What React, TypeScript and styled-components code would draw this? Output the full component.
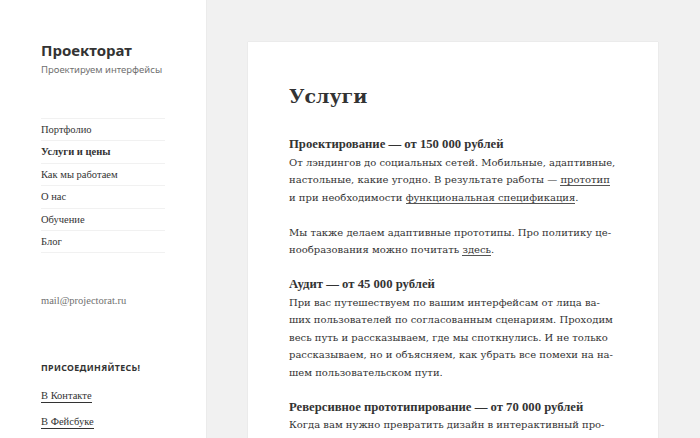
import React from "react";
import styled, { createGlobalStyle } from "styled-components";

const GlobalStyle = createGlobalStyle`
  html, body {
    margin: 0;
    padding: 0;
    background: #f1f1f1;
  }
  body {
    font-family: "DejaVu Serif", "Liberation Serif", serif;
    color: #333;
    overflow: hidden;
  }
`;

const menu = [
  { title: "Портфолио" },
  { title: "Услуги и цены", current: true },
  { title: "Как мы работаем" },
  { title: "О нас" },
  { title: "Обучение" },
  { title: "Блог" },
];

const App: React.FunctionComponent = () => {
  return (
    <Page>
      <GlobalStyle />
      <Sidebar>
        <SiteTitle>Проекторат</SiteTitle>
        <Tagline>Проектируем интерфейсы</Tagline>
        <Nav>
          {menu.map((item) => (
            <NavItem key={item.title} $current={item.current}>
              {item.title}
            </NavItem>
          ))}
        </Nav>
        <Email>mail@projectorat.ru</Email>
        <WidgetTitle>Присоединяйтесь!</WidgetTitle>
        <WidgetLink>В Контакте</WidgetLink>
        <WidgetLink>В Фейсбуке</WidgetLink>
      </Sidebar>
      <Content>
        <Card>
          <Title>Услуги</Title>
          <Para>
            <Lead>Проектирование — от 150 000 рублей</Lead>
            <br />
            От лэндингов до социальных сетей. Мобильные, адаптивные,
            <br />
            настольные, какие угодно. В результате работы — <Link>прототип</Link>
            <br />и при необходимости <Link>функциональная спецификация</Link>.
          </Para>
          <Para>
            Мы также делаем адаптивные прототипы. Про политику це-
            <br />
            нообразования можно почитать <Link>здесь</Link>.
          </Para>
          <Para>
            <Lead>Аудит — от 45 000 рублей</Lead>
            <br />
            При вас путешествуем по вашим интерфейсам от лица ва-
            <br />
            ших пользователей по согласованным сценариям. Проходим
            <br />
            весь путь и рассказываем, где мы споткнулись. И не только
            <br />
            рассказываем, но и объясняем, как убрать все помехи на на-
            <br />
            шем пользовательском пути.
          </Para>
          <Para>
            <Lead>Реверсивное прототипирование — от 70 000 рублей</Lead>
            <br />
            Когда вам нужно превратить дизайн в интерактивный про-
            <br />
            тотип, чтобы проверить его на пользователях до начала
          </Para>
        </Card>
      </Content>
    </Page>
  );
};

const Page = styled.div`
  display: flex;
  width: 700px;
  height: 438px;
  overflow: hidden;
`;

const Sidebar = styled.aside`
  width: 206px;
  flex-shrink: 0;
  background: #fff;
  box-shadow: 0 0 1px rgba(0, 0, 0, 0.15);
  padding: 40px 0 0 41px;
  box-sizing: border-box;
  font-family: "Liberation Serif", serif;
`;

const SiteTitle = styled.div`
  font-family: "Noto Sans", sans-serif;
  font-weight: 700;
  font-size: 15px;
  line-height: 20px;
  color: #333;
`;

const Tagline = styled.div`
  font-family: "Noto Sans", sans-serif;
  font-size: 9.5px;
  line-height: 14px;
  margin-top: 3px;
  color: #707070;
`;

const Nav = styled.ul`
  list-style: none;
  margin: 41px 0 0;
  padding: 0;
  width: 124px;
  border-top: 1px solid #f1f1f1;
`;

const NavItem = styled.li<{ $current?: boolean }>`
  font-size: 10.5px;
  line-height: 21.4px;
  border-bottom: 1px solid #f1f1f1;
  color: #333;
  font-weight: ${(p) => (p.$current ? 700 : 400)};
`;

const Email = styled.div`
  margin-top: 41px;
  font-size: 10.5px;
  line-height: 14px;
  color: #707070;
`;

const WidgetTitle = styled.div`
  margin-top: 54px;
  font-family: "Noto Sans", sans-serif;
  font-weight: 700;
  font-size: 8.8px;
  letter-spacing: 0.04em;
  text-transform: uppercase;
  color: #333;
  margin-bottom: 15px;
`;

const WidgetLink = styled.div`
  display: table;
  font-size: 10.5px;
  line-height: 13px;
  color: #333;
  border-bottom: 1px solid #333;
  margin-bottom: 12px;
`;

const Content = styled.main`
  flex: 1;
  min-width: 0;
  padding: 42px 42px 0 42px;
`;

const Card = styled.article`
  background: #fff;
  box-shadow: 0 0 1px rgba(0, 0, 0, 0.15);
  padding: 40px 41px 0;
  height: 500px;
`;

const Title = styled.h1`
  margin: 0 0 26px;
  font-size: 19px;
  line-height: 28px;
  font-weight: 700;
  color: #333;
`;

const Para = styled.p`
  margin: 0 0 17.5px;
  font-size: 10px;
  line-height: 17.5px;
  color: #333;
  white-space: nowrap;
`;

const Lead = styled.strong`
  font-family: "Liberation Serif", serif;
  font-weight: 700;
  font-size: 12.7px;
  color: #333;
`;

const Link = styled.span`
  border-bottom: 1px solid #555;
`;

export default App;
